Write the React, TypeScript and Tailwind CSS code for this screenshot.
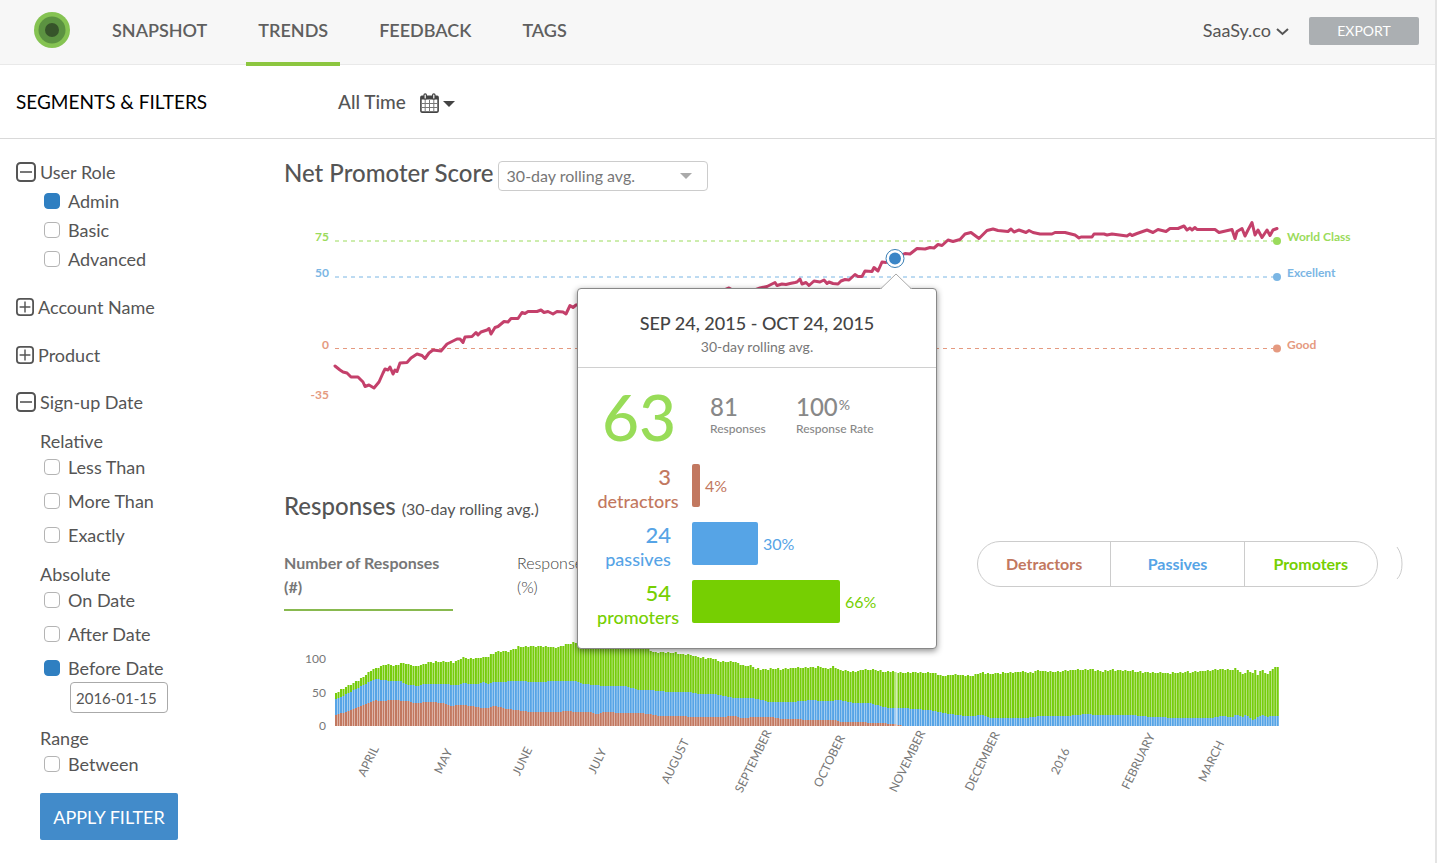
import { useState, type ReactNode } from "react";
import clsx from "clsx";

type Point = [number, number];

const NAV = ["SNAPSHOT", "TRENDS", "FEEDBACK", "TAGS"];

const LEVELS = [
  { y: 241, value: "75", label: "World Class", color: "#9bdb5c" },
  { y: 277, value: "50", label: "Excellent", color: "#7bb6e4" },
  { y: 348.5, value: "0", label: "Good", color: "#e59a80" },
];

const SCORE_LINE: Point[] = [
  [335, 366], [340, 370], [343, 372], [347, 373], [351, 377], [358, 377], [363, 382], [365, 386.5],
  [369, 385], [374, 388], [379, 382], [383, 373], [385, 369], [388, 370], [390, 367], [393, 374],
  [395, 370], [397, 371.5], [400, 363], [407, 362.5], [411, 358], [417, 354], [422, 355.5],
  [425, 358.5], [429, 353], [433, 350], [441, 351], [447, 344], [457, 339], [460, 339], [463, 342.5],
  [465, 337], [472, 336.5], [476, 332.5], [478, 335], [481, 332], [487, 330], [489, 328.5],
  [491, 334], [495, 327.5], [498, 326.5], [504, 321.5], [508, 322], [511, 318.5], [518, 318.5],
  [522, 312.5], [525, 313.5], [528, 311.5], [537, 311.5], [541, 310], [544, 312.5], [548, 311.5],
  [553, 314], [557, 311.5], [563, 312], [566, 314], [570, 305.5], [573, 307.5], [576, 305],
  [600, 302], [640, 300], [690, 293], [722, 291], [729, 288], [736, 292], [752, 291], [760, 288],
  [767, 286.5], [772, 284], [775, 282.5], [777, 285.5], [782, 284], [786, 284.5], [790, 283.5],
  [795, 282.5], [797, 282], [800, 279], [802, 284], [806, 282.5], [809, 285.5], [814, 281],
  [820, 282], [824, 280], [827, 283.5], [829, 282], [833, 283.5], [838, 284], [841, 281],
  [845, 279.5], [849, 280], [855, 274.5], [858, 276.5], [862, 276.5], [865, 271], [872, 271.5],
  [874, 267.5], [878, 271], [882, 262], [886, 262.5], [895, 258], [905, 253.5], [910, 254],
  [917, 248.5], [925, 249], [930, 247.5], [934, 248], [938, 244.5], [942, 245.5], [948, 240],
  [953, 241.5], [960, 239.5], [965, 234], [971, 232.5], [979, 238.5], [987, 230.5], [993, 229],
  [998, 230.5], [1008, 231.5], [1011, 229], [1014, 232], [1019, 230], [1026, 232.5], [1029, 230.5],
  [1033, 232.5], [1040, 234], [1052, 234], [1055, 232.5], [1065, 232.5], [1075, 235], [1079, 238],
  [1081, 237], [1092, 237], [1094, 234], [1104, 234], [1107, 235], [1112, 234], [1127, 236],
  [1130, 234], [1132, 235.5], [1137, 233.5], [1147, 230], [1153, 232.5], [1158, 229.5], [1166, 231.5],
  [1170, 228.5], [1178, 228.5], [1184, 226], [1187, 230], [1190, 228], [1192, 230], [1195, 227.5],
  [1197, 229.5], [1215, 229.5], [1219, 232.5], [1232, 229.5], [1235, 238.5], [1237, 231.5],
  [1242, 228.5], [1245, 236], [1248, 230], [1252, 222.5], [1255, 235], [1258, 230], [1262, 237.5],
  [1267, 230], [1270, 235.5], [1273, 230], [1277, 228.5],
];

// Upper edge of each stacked band.
const PROMOTERS: Point[] = [
  [335, 693.5], [347, 686.5], [358, 680.5], [373, 669.5], [388, 664], [395, 666.5], [401, 663],
  [408, 664], [417, 666.5], [430, 662], [455, 662], [462, 658], [477, 658.5], [488, 656.5],
  [497, 651.5], [510, 651], [518, 647], [533, 646], [547, 646.5], [558, 647.5], [572, 643],
  [600, 642], [645, 646], [653, 652], [675, 652.5], [682, 655], [687, 654], [700, 657.5],
  [713, 658.5], [720, 662], [735, 661.5], [742, 665.5], [752, 665.5], [755, 669], [780, 669],
  [797, 667.5], [820, 667], [827, 669], [834, 666], [840, 670.5], [857, 671.5], [863, 669.5],
  [877, 670], [885, 672.5], [890, 671.5], [900, 672.5], [933, 672.5], [943, 676], [957, 674.5],
  [970, 676], [982, 672.5], [990, 674], [1007, 672.5], [1023, 671.5], [1032, 673.5], [1037, 670.5],
  [1057, 672], [1070, 670], [1092, 669.5], [1103, 671.5], [1110, 669.5], [1133, 671], [1147, 672.5],
  [1167, 673], [1187, 672], [1200, 671.5], [1213, 670], [1238, 669], [1243, 675], [1247, 670.5],
  [1253, 673], [1256, 669.5], [1258, 675], [1261, 669], [1268, 674.5], [1273, 668.5], [1279, 667],
];

const PASSIVES: Point[] = [
  [335, 699.5], [347, 694], [358, 688], [375, 679], [390, 681], [402, 681.5], [405, 684], [417, 686],
  [427, 683.5], [447, 684], [457, 685.5], [462, 683], [477, 684.5], [483, 682], [487, 684],
  [493, 682], [520, 681], [543, 682.5], [550, 680.5], [577, 681.5], [583, 684], [600, 685.5],
  [627, 686.5], [640, 690.5], [650, 690], [673, 692.5], [690, 692], [700, 694], [718, 694.5],
  [733, 698], [750, 697.5], [770, 702], [793, 702], [812, 700], [827, 701.5], [838, 700],
  [857, 703.5], [867, 702.5], [887, 707.5], [910, 708.5], [933, 710.5], [947, 713.5], [970, 716.5],
  [982, 714.5], [988, 717.5], [1030, 717.5], [1040, 716], [1063, 716.5], [1087, 714], [1103, 715.5],
  [1127, 714.5], [1147, 716.5], [1187, 718.5], [1213, 717.5], [1223, 716], [1233, 717.5],
  [1236, 714.5], [1243, 717.5], [1246, 714.5], [1253, 720.5], [1262, 714.5], [1268, 717.5],
  [1272, 715.5], [1279, 715.5],
];

const DETRACTORS: Point[] = [
  [335, 715], [352, 710], [362, 706], [375, 700], [383, 701.5], [390, 700], [408, 701], [417, 703.5],
  [427, 701.5], [443, 703], [452, 706], [462, 704.5], [487, 708.5], [493, 705.5], [507, 709],
  [527, 711.5], [560, 712], [565, 710.5], [580, 712.5], [590, 711.5], [597, 714], [607, 711.5],
  [620, 713.5], [640, 712.5], [657, 715.5], [673, 715.5], [687, 716.5], [700, 716.5], [720, 717.5],
  [735, 715.5], [742, 718], [767, 716.5], [780, 718.5], [813, 720], [835, 720], [840, 721.5],
  [880, 723], [897, 724.5], [903, 726], [1279, 726],
];

const MONTHS: [string, number][] = [
  ["APRIL", 368], ["MAY", 443], ["JUNE", 522], ["JULY", 597], ["AUGUST", 675], ["SEPTEMBER", 753],
  ["OCTOBER", 829], ["NOVEMBER", 907], ["DECEMBER", 982], ["2016", 1060], ["FEBRUARY", 1138],
  ["MARCH", 1211],
];

const BREAKDOWN = [
  { count: 3, name: "detractors", pct: 4, width: 8, text: "text-[#c27860]", bar: "bg-[#c27860]" },
  { count: 24, name: "passives", pct: 30, width: 66, text: "text-[#56a4e6]", bar: "bg-[#56a4e6]" },
  { count: 54, name: "promoters", pct: 66, width: 148, text: "text-[#76cf02]", bar: "bg-[#76cf02]" },
];

const BASELINE = 726;
const BAR_COUNT = 378;

function valueAt(points: Point[], x: number) {
  const i = points.findIndex(([px]) => px >= x);
  if (i <= 0) return points[i === 0 ? 0 : points.length - 1][1];
  const [x0, y0] = points[i - 1];
  const [x1, y1] = points[i];
  return y0 + ((y1 - y0) * (x - x0)) / (x1 - x0);
}

function barPath(top: Point[], bottom?: Point[]) {
  let d = "";
  for (let i = 0; i < BAR_COUNT; i++) {
    const x = 336 + i * 2.498;
    // day-to-day variation on the total
    const wobble = top === PROMOTERS ? Math.sin(i * 2.3) * 0.7 : 0;
    const y0 = Math.round(valueAt(top, x) + wobble);
    const y1 = bottom ? Math.round(valueAt(bottom, x)) : BASELINE;
    if (y1 > y0) d += `M${x.toFixed(2)} ${y0}V${y1}`;
  }
  return d;
}

function Toggle({ open, onClick }: { open: boolean; onClick: () => void }) {
  const size = open ? 20 : 18;
  return (
    <button type="button" onClick={onClick} aria-label={open ? "Collapse" : "Expand"} className="shrink-0">
      <svg width={size} height={size} viewBox="0 0 20 20" fill="none" stroke="#555" strokeWidth="2">
        <rect x="1" y="1" width="18" height="18" rx="3.5" />
        <path d={open ? "M4 10H16" : "M4 10H16M10 4V16"} strokeWidth="1.6" />
      </svg>
    </button>
  );
}

function Group({ title, className, defaultOpen = false, children }: {
  title: string;
  className?: string;
  defaultOpen?: boolean;
  children?: ReactNode;
}) {
  const [open, setOpen] = useState(defaultOpen);
  return (
    <section className={className}>
      <h3 className="flex h-[29px] items-center gap-1">
        <Toggle open={open} onClick={() => setOpen((o) => !o)} />
        {title}
      </h3>
      {open && children}
    </section>
  );
}

function Check({ label, className, checked = false }: { label: string; className: string; checked?: boolean }) {
  return (
    <label className={clsx("ml-7 flex items-center gap-2", className)}>
      <input
        type="checkbox"
        defaultChecked={checked}
        className="size-4 shrink-0 appearance-none rounded-sm border border-[#b4b4b4] bg-white checked:border-[#2f7fc1] checked:bg-[#2f7fc1]"
      />
      {label}
    </label>
  );
}

function Sidebar() {
  return (
    <aside className="w-[268px] shrink-0 pt-[18px] pl-4 text-lg">
      <Group title="User Role" defaultOpen>
        <Check label="Admin" className="h-[29px]" checked />
        <Check label="Basic" className="h-[29px]" />
        <Check label="Advanced" className="h-[29px]" />
      </Group>
      <Group title="Account Name" className="mt-[19px]" />
      <Group title="Product" className="mt-[19px]" />
      <Group title="Sign-up Date" className="mt-[18px]" defaultOpen>
        <h4 className="mt-3 ml-6 h-[26px] leading-[26px]">Relative</h4>
        <div className="flex flex-col gap-2">
          <Check label="Less Than" className="h-[26px]" />
          <Check label="More Than" className="h-[26px]" />
          <Check label="Exactly" className="h-[26px]" />
        </div>
        <h4 className="mt-[13px] ml-6 h-[26px] leading-[26px]">Absolute</h4>
        <div className="flex flex-col gap-2">
          <Check label="On Date" className="h-[26px]" />
          <Check label="After Date" className="h-[26px]" />
          <Check label="Before Date" className="h-[26px]" checked />
        </div>
        <input
          aria-label="Before date"
          defaultValue="2016-01-15"
          className="mt-px ml-[54px] block h-[31px] w-[98px] rounded-sm border border-[#aaa] px-[5px] text-[15px]"
        />
        <h4 className="mt-3 ml-6 h-[26px] leading-[26px]">Range</h4>
        <Check label="Between" className="h-[26px]" />
      </Group>
      <button className="mt-4 ml-6 h-[47px] w-[138px] rounded-xs bg-[#428bca] text-lg text-white">
        APPLY FILTER
      </button>
    </aside>
  );
}

function Header() {
  return (
    <header className="flex h-[65px] items-start border-b border-[#e9e9e9] bg-[#f7f7f7] pr-4 pl-[34px]">
      <svg width="36" height="36" viewBox="0 0 36 36" className="mt-3 shrink-0">
        <circle cx="18" cy="18" r="18" fill="#85c352" />
        <circle cx="18" cy="18" r="13.5" fill="#5b9241" />
        <circle cx="18" cy="18" r="7" fill="#36542a" />
      </svg>
      <nav className="ml-[30px] flex gap-[27px]">
        {NAV.map((item) => (
          <a
            key={item}
            href="#"
            className={clsx(
              "h-[66px] border-b-4 px-3 pt-[18px] text-lg leading-6 font-semibold text-[#5f5f5f]",
              item === "TRENDS" ? "border-[#8cc63f]" : "border-transparent",
            )}
          >
            {item}
          </a>
        ))}
      </nav>
      <button className="mt-[18px] ml-auto flex items-center gap-[5px] text-lg leading-6">
        SaaSy.co
        <svg width="13" height="8" viewBox="0 0 13 8" fill="none" stroke="#555" strokeWidth="2" className="mt-[3px]">
          <path d="M1 1L6.5 6L12 1" />
        </svg>
      </button>
      <button className="mt-[17px] ml-5 h-7 w-[110px] rounded-xs bg-[#abafb2] text-sm text-white">EXPORT</button>
    </header>
  );
}

function FilterBar() {
  return (
    <div className="flex h-[74px] items-center border-b border-[#d9d9d9] pt-[2px] pl-4">
      <h2 className="w-[322px] text-[19px] text-black">SEGMENTS &amp; FILTERS</h2>
      <button className="flex items-center text-[19px] font-medium">
        All Time
        <svg width="19" height="20" viewBox="0 0 19 20" fill="none" stroke="#444" className="ml-[14px]">
          <rect x="0.9" y="3.4" width="17.2" height="15.7" rx="1" strokeWidth="1.6" />
          <path d="M1 5H18" strokeWidth="3" />
          <path d="M1 10.5H18M1 14.5H18M5.2 7V19M9.5 7V19M13.8 7V19" stroke="#777" />
          <path d="M5.2 2V5M13.8 2V5" strokeWidth="3.6" strokeLinecap="round" />
          <path d="M5.2 2V5M13.8 2V5" stroke="#fff" strokeWidth="1.2" strokeLinecap="round" />
        </svg>
        <svg width="12" height="6" viewBox="0 0 12 6" fill="#444" className="mt-[2px] ml-[4px]">
          <path d="M0 0H12L6 6Z" />
        </svg>
      </button>
    </div>
  );
}

function ScoreChart() {
  return (
    <svg viewBox="284 210 1119 200" className="mt-[19px] block w-full text-xs font-bold" role="img" aria-label="Net Promoter Score over time">
      {LEVELS.map((l) => (
        <g key={l.value} fill={l.color}>
          <path d={`M335 ${l.y}H1277`} stroke={l.color} strokeDasharray="4 4" strokeWidth="1" />
          <text x="329" y={l.y} textAnchor="end">{l.value}</text>
          <text x="1287" y={l.y}>{l.label}</text>
        </g>
      ))}
      <text x="329" y="399" textAnchor="end" fill="#e59a80">-35</text>
      <path
        d={"M" + SCORE_LINE.map((p) => p.join(" ")).join("L")}
        fill="none"
        stroke="#c4406b"
        strokeWidth="3"
        strokeLinejoin="round"
        strokeLinecap="round"
      />
      {LEVELS.map((l) => (
        <circle key={l.value} cx="1277" cy={l.y} r="4" fill={l.color} />
      ))}
      <circle cx="895" cy="258.5" r="9" fill="#fff" stroke="#3a7fb5" strokeWidth="1" />
      <circle cx="895" cy="258.5" r="6" fill="#3a85c6" />
    </svg>
  );
}

function ResponsesChart() {
  return (
    <svg viewBox="284 620 1119 185" className="mt-[9px] block w-full text-xs" role="img" aria-label="Responses by month">
      <g fill="#777" textAnchor="end">
        <text x="326" y="663">100</text>
        <text x="326" y="697">50</text>
        <text x="326" y="730">0</text>
      </g>
      <g strokeWidth="2.05">
        <path d={barPath(PROMOTERS, PASSIVES)} stroke="#76cc0c" />
        <path d={barPath(PASSIVES, DETRACTORS)} stroke="#56a4e6" />
        <path d={barPath(DETRACTORS)} stroke="#c27860" />
      </g>
      <rect x="895" y="671" width="3" height="55" fill="#fff" opacity="0.45" />
      <g fill="#777" textAnchor="middle">
        {MONTHS.map(([name, x]) => (
          <text key={name} transform={`translate(${x + 4} 763) rotate(-64)`}>{name}</text>
        ))}
      </g>
    </svg>
  );
}

function ScorePopover() {
  return (
    <div className="absolute top-[149px] left-[293px] h-[361px] w-[360px] rounded-sm border border-[#888] bg-white shadow-[0_2px_6px_rgba(0,0,0,0.45)]">
      <svg width="32" height="17" viewBox="0 0 32 17" className="absolute -top-4 right-6">
        <path d="M1 16L16 1L31 16V17H1Z" fill="#fff" />
        <path d="M0 15.5H1L16 1L31 15.5H32" fill="none" stroke="#aaa" />
      </svg>
      <div className="flex h-[79px] flex-col items-center border-b border-[#d0d0d0] pt-[22px]">
        <h3 className="text-lg leading-6 font-medium text-[#444]">SEP 24, 2015 - OCT 24, 2015</h3>
        <p className="text-sm leading-6 text-[#777]">30-day rolling avg.</p>
      </div>
      <div className="flex pt-4 pl-6 text-[#888]">
        <div className="w-[108px] text-[64px] leading-[66px] font-medium text-[#98dc58]">63</div>
        <div className="w-[86px] pt-[9px]">
          <div className="text-2xl leading-[28px] font-medium">81</div>
          <div className="text-xs leading-4 font-medium">Responses</div>
        </div>
        <div className="pt-[9px]">
          <div className="flex items-start text-2xl leading-[28px] font-medium">
            100<span className="ml-px text-sm leading-6">%</span>
          </div>
          <div className="text-xs leading-4 font-medium">Response Rate</div>
        </div>
      </div>
      <div className="mt-[14px] flex flex-col gap-[10px] pl-[18px]">
        {BREAKDOWN.map((b) => (
          <div key={b.name} className={clsx("flex h-12 items-start", b.text)}>
            <div className="w-[84px] text-center">
              <div className="pr-[9px] text-right text-[22px] leading-[26px] font-medium">{b.count}</div>
              <div className="text-lg leading-[22px] font-medium">{b.name}</div>
            </div>
            <div className={clsx("ml-3 h-[43px] rounded-xs", b.bar)} style={{ width: b.width }} />
            <span className="ml-[5px] text-base leading-[43px]">{b.pct}%</span>
          </div>
        ))}
      </div>
    </div>
  );
}

function Trends() {
  return (
    <main className="relative ml-4 mr-8 min-w-0 flex-1 pt-[22px]">
      <div className="flex h-[30px] items-start gap-1">
        <h2 className="text-2xl leading-6 font-medium">Net Promoter Score</h2>
        <div className="relative">
          <select
            aria-label="Averaging period"
            className="block h-[30px] w-[210px] appearance-none rounded-sm border border-[#ccc] bg-white px-2 text-base text-[#777]"
          >
            <option>30-day rolling avg.</option>
          </select>
          <svg width="12" height="6" viewBox="0 0 12 6" fill="#aaa" className="pointer-events-none absolute top-3 right-4">
            <path d="M0 0H12L6 6Z" />
          </svg>
        </div>
      </div>
      <ScoreChart />
      <h2 className="mt-20 text-2xl leading-8 font-medium">
        Responses <span className="text-base font-normal">(30-day rolling avg.)</span>
      </h2>
      <div className="mt-[19px] flex h-[70px] items-start text-base leading-6 text-[#777]">
        <button className="h-[70px] w-[169px] border-b-2 border-[#88b94f] pt-[10px] pb-[10px] text-left font-bold">
          Number of Responses (#)
        </button>
        <button className="ml-16 w-[72px] pt-[10px] text-left font-light text-[#444]">
          Responses (%)
        </button>
        <div className="ml-auto flex h-[46px] w-[401px] divide-x divide-[#ccc] rounded-full border border-[#ccc] font-bold">
          <button className="flex-1 text-[#c27860]">Detractors</button>
          <button className="flex-1 text-[#56a4e6]">Passives</button>
          <button className="flex-1 text-[#76cf02]">Promoters</button>
        </div>
        <svg width="7" height="46" viewBox="0 0 7 46" fill="none" stroke="#ccc" className="ml-[18px]">
          <path d="M1 6Q6 13 6 23T1 38" />
        </svg>
      </div>
      <ResponsesChart />
      <ScorePopover />
    </main>
  );
}

export default function App() {
  return (
    <div className="min-h-screen border-r-2 border-[#e4e4e4] bg-white font-['Lato',sans-serif] text-[#555]">
      <Header />
      <FilterBar />
      <div className="flex">
        <Sidebar />
        <Trends />
      </div>
    </div>
  );
}
